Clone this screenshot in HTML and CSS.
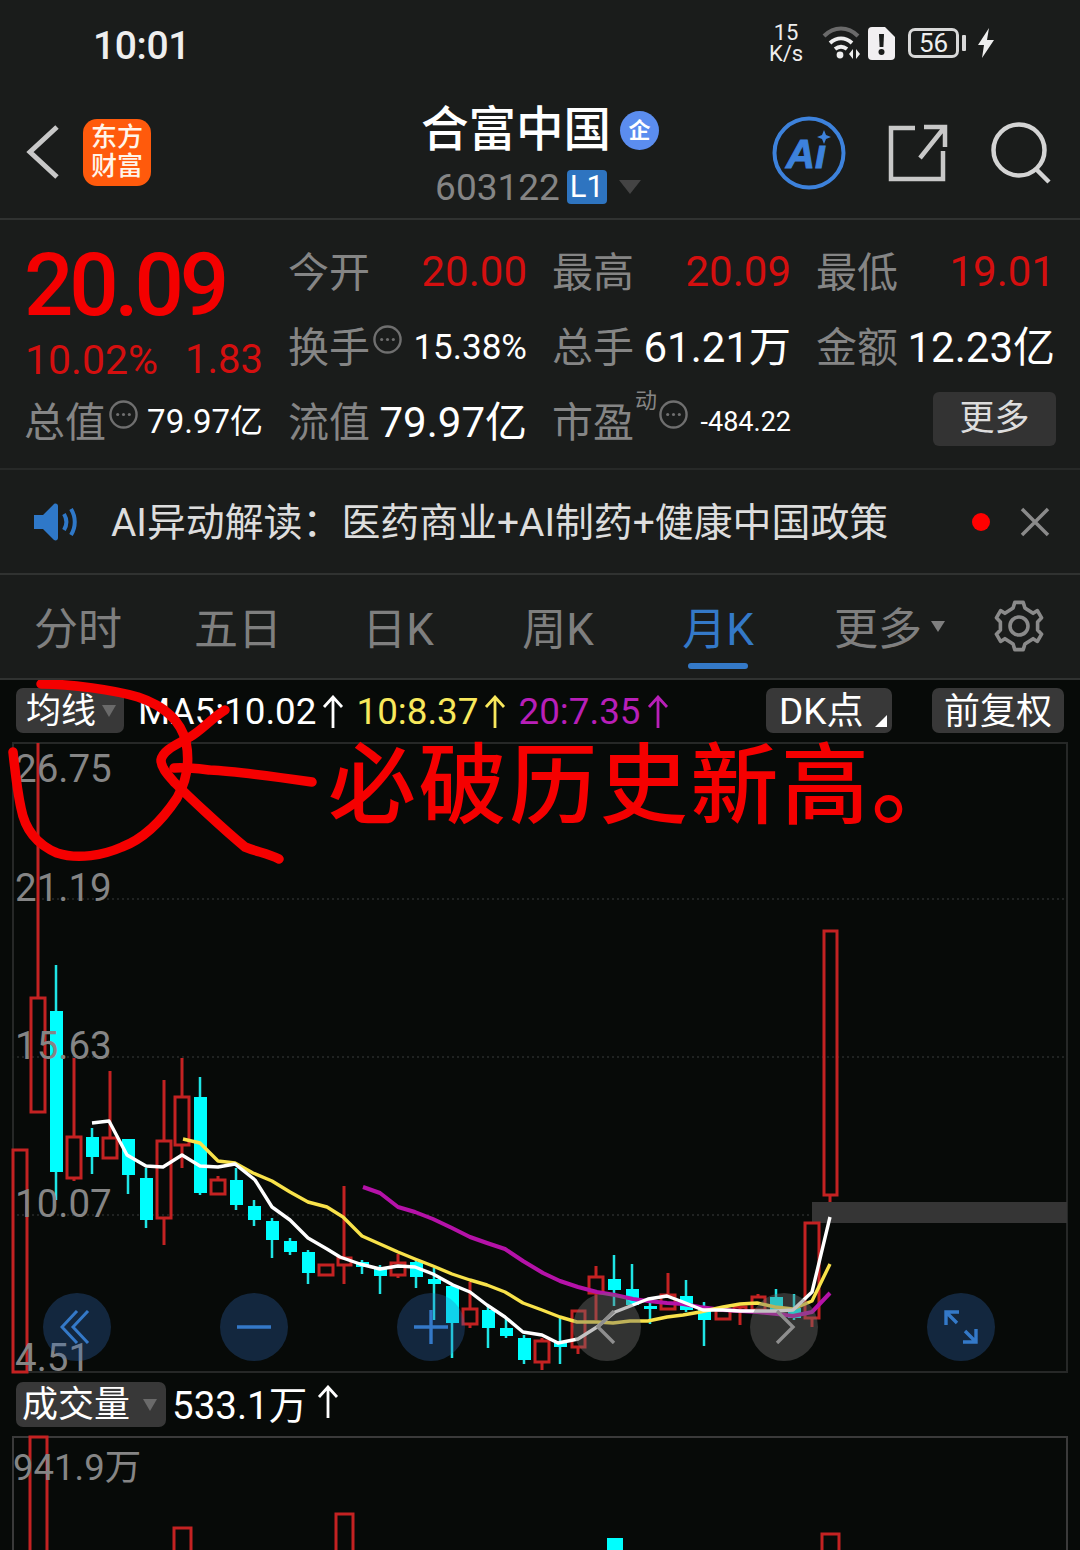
FILE: index.html
```html
<!DOCTYPE html>
<html lang="zh-CN">
<head>
    <meta charset="UTF-8">
    <meta name="viewport" content="width=device-width, initial-scale=1.0">
    <title>合富中国 603122</title>
    <link rel="stylesheet" href="styles.css">
</head>
<body>
    <svg class="defs">
        <defs>
            <symbol id="more" viewBox="0 0 32 32">
                <circle cx="16" cy="16" r="13.5" fill="none" stroke="#6f6f6f" stroke-width="2.5"/>
                <circle cx="10" cy="16" r="1.6" fill="#6f6f6f"/>
                <circle cx="16" cy="16" r="1.6" fill="#6f6f6f"/>
                <circle cx="22" cy="16" r="1.6" fill="#6f6f6f"/>
            </symbol>
            <symbol id="rise" viewBox="0 0 22 34">
                <path d="M11 33V2M2 12l9-10 9 10" fill="none" stroke="currentColor" stroke-width="2.8"/>
            </symbol>
        </defs>
    </svg>

    <!-- status bar -->
    <div class="status">
        <span class="clock">10:01</span>
        <div class="status-icons">
            <span class="speed">15<br>K/s</span>
            <svg class="wifi" width="40" height="34" viewBox="0 0 40 34">
                <path d="M2 10C12 0 26 0 36 10" fill="none" stroke="#6a6a6a" stroke-width="4"/>
                <path d="M8 17c7-6 15-6 22 0M13 23c4-3 8-3 12 0" fill="none" stroke="#eee" stroke-width="4"/>
                <circle cx="18" cy="29" r="3.4" fill="#eee"/>
                <path d="M31 23v10l-4-5zM34 23v10l4-5z" fill="#eee"/>
            </svg>
            <svg class="notice-sim" width="27" height="33" viewBox="0 0 27 33">
                <path d="M4 0h13l10 10v19a4 4 0 0 1-4 4H4a4 4 0 0 1-4-4V4a4 4 0 0 1 4-4z" fill="#f1eff1"/>
                <path d="M11 7h5l-.6 13h-3.8z" fill="#1a1c1b"/>
                <circle cx="13.5" cy="25" r="3" fill="#1a1c1b"/>
            </svg>
            <div class="battery"><span>56</span></div>
            <span class="battery-nub"></span>
            <svg class="bolt" width="16" height="30" viewBox="0 0 16 30">
                <path d="M11 0L0 17h6L4 30l12-18H9z" fill="#eee"/>
            </svg>
        </div>
    </div>

    <!-- title bar -->
    <div class="nav">
        <div class="nav-left">
            <svg class="back" width="36" height="56" viewBox="0 0 36 56">
                <path d="M32 3L5 28l27 25" fill="none" stroke="#c8c8c8" stroke-width="5"/>
            </svg>
            <div class="logo">东方<br>财富</div>
        </div>
        <div class="nav-title">
            <div class="name-row">
                <span class="name">合富中国</span>
                <span class="name-badge">企</span>
            </div>
            <div class="code-row">
                <span class="code">603122</span>
                <span class="level">L1</span>
                <span class="code-caret"></span>
            </div>
        </div>
        <div class="nav-right">
            <svg width="74" height="74" viewBox="0 0 74 74">
                <circle cx="37" cy="37" r="34.5" fill="none" stroke="#3d82dc" stroke-width="4"/>
                <text class="ai-text" x="14" y="52">Aı</text>
                <path d="M52 14l2 5 5 2-5 2-2 5-2-5-5-2 5-2z" fill="#3d82dc"/>
            </svg>
            <svg width="60" height="58" viewBox="0 0 60 58">
                <path d="M27 4H3v51h52V27M32 34L56 4M36 3h21v20" fill="none" stroke="#c8c8c8" stroke-width="4.5"/>
            </svg>
            <svg width="62" height="62" viewBox="0 0 62 62">
                <circle cx="29" cy="28" r="25.5" fill="none" stroke="#d4d4d4" stroke-width="4.5"/>
                <path d="M46 47l13 13" fill="none" stroke="#d4d4d4" stroke-width="4.5"/>
            </svg>
        </div>
    </div>

    <!-- quote table -->
    <div class="quote">
        <div class="price-box">
            <div class="price">20.09</div>
            <div class="change"><span>10.02%</span><span>1.83</span></div>
        </div>
        <div class="cell"><span class="label">今开</span><span class="val up">20.00</span></div>
        <div class="cell"><span class="label">最高</span><span class="val up">20.09</span></div>
        <div class="cell"><span class="label">最低</span><span class="val up">19.01</span></div>
        <div class="cell"><span class="label">换手<svg class="more"><use href="#more"/></svg></span><span class="val small">15.38%</span></div>
        <div class="cell"><span class="label">总手</span><span class="val">61.21万</span></div>
        <div class="cell"><span class="label">金额</span><span class="val">12.23亿</span></div>
        <div class="cell"><span class="label">总值<svg class="more"><use href="#more"/></svg></span><span class="val smaller">79.97亿</span></div>
        <div class="cell"><span class="label">流值</span><span class="val">79.97亿</span></div>
        <div class="cell"><span class="label">市盈<sup class="dyn">动</sup><svg class="more"><use href="#more"/></svg></span><span class="val tiny">-484.22</span></div>
        <div class="cell cell-end"><span class="more-btn">更多</span></div>
    </div>

    <!-- AI notice -->
    <div class="notice">
        <svg width="46" height="38" viewBox="0 0 46 38">
            <path d="M1 12h9L21 1c2-1 4 0 4 2v32c0 2-2 3-4 2L10 26H1z" fill="#2f78c8"/>
            <path d="M31 11c3 5 3 11 0 16M38 6c5 8 5 18 0 26" fill="none" stroke="#2f78c8" stroke-width="4"/>
        </svg>
        <span class="notice-text">AI异动解读：医药商业+AI制药+健康中国政策</span>
        <span class="dot"></span>
        <svg width="30" height="30" viewBox="0 0 30 30">
            <path d="M2 2l26 26M28 2L2 28" fill="none" stroke="#8a8a8a" stroke-width="3.5"/>
        </svg>
    </div>

    <!-- period tabs -->
    <div class="tabs">
        <span class="tab">分时</span>
        <span class="tab">五日</span>
        <span class="tab">日K</span>
        <span class="tab">周K</span>
        <span class="tab active">月K</span>
        <span class="tab">更多<i class="tab-caret"></i></span>
        <svg class="gear" width="52" height="52" viewBox="0 0 52 52">
            <path d="M21.8 2.4h8.4l1.7 5.5 8.2 5.4 4.3-2.7 4.2 7.2-4 4.25v7.9l4 4.25-4.2 7.2-4.3-2.7-8.2 5.4-1.7 5.5h-8.4l-1.7-5.5-8.2-5.4-4.3 2.7-4.2-7.2 4-4.25v-7.9l-4-4.25 4.2-7.2 4.3 2.7 8.2-5.4z" fill="none" stroke="#8a8a8a" stroke-width="3.6" stroke-linejoin="round"/>
            <circle cx="26" cy="26" r="9" fill="none" stroke="#8a8a8a" stroke-width="3.6"/>
        </svg>
    </div>

    <!-- chart area -->
    <div class="chart">
        <div class="chart-head">
            <span class="chip chip-ma">均线<i class="caret"></i></span>
            <div class="ma-values">
                <span class="ma ma5">MA5:10.02<svg class="rise"><use href="#rise"/></svg></span>
                <span class="ma ma10">10:8.37<svg class="rise"><use href="#rise"/></svg></span>
                <span class="ma ma20">20:7.35<svg class="rise"><use href="#rise"/></svg></span>
            </div>
            <span class="chip chip-dk">DK点</span>
            <span class="chip chip-fq">前复权</span>
        </div>

        <div class="plot">
            <div class="plot-buttons">
                <span class="round"><svg width="34" height="34" viewBox="0 0 34 34"><path d="M17 1L2 17l15 16M28 1L13 17l15 16" fill="none" stroke="#3479c8" stroke-width="3"/></svg></span>
                <span class="round"><svg width="34" height="34" viewBox="0 0 34 34"><path d="M0 17h34" stroke="#3479c8" stroke-width="3.4"/></svg></span>
                <span class="round"><svg width="34" height="34" viewBox="0 0 34 34"><path d="M0 17h34M17 0v34" stroke="#3479c8" stroke-width="3.4"/></svg></span>
                <span class="round round-gray"><svg width="34" height="34" viewBox="0 0 34 34"><path d="M24 1L8 17l16 16" fill="none" stroke="#8e8e8e" stroke-width="3.4"/></svg></span>
                <span class="round round-gray"><svg width="34" height="34" viewBox="0 0 34 34"><path d="M10 1l16 16-16 16" fill="none" stroke="#8e8e8e" stroke-width="3.4"/></svg></span>
                <span class="round"><svg width="34" height="34" viewBox="0 0 34 34"><path d="M2 15V2h13M2 2l11 11M32 19v13H19M32 32L21 21" fill="none" stroke="#3479c8" stroke-width="3.4"/></svg></span>
            </div>
        </div>

        <div class="volume-head">
            <span class="chip chip-vol">成交量<i class="caret"></i></span>
            <span class="vol-value">533.1万<svg class="rise vol-rise"><use href="#rise"/></svg></span>
        </div>
        <div class="volume"></div>

        <!-- candles, lines and axis labels, in page coordinates -->
        <svg class="canvas" width="1080" height="870" viewBox="0 680 1080 870">
            <path class="gridline" d="M12 899H1067M12 1057H1067M12 1215H812"/>
            <rect class="last-bar" x="812" y="1202" width="255" height="21"/>

            <g class="candle-up">
                <path d="M38 743V998M74 1058V1137M74 1178V1181M110 1071V1138M164 1080V1141M164 1218V1245M182 1058V1097M182 1145V1168M218 1176V1180M344 1186V1258M344 1265V1284M398 1254V1263M398 1275V1278M470 1282V1309M470 1324V1328M542 1338V1341M542 1362V1370M578 1347V1354M596 1266V1277M596 1293V1320M668 1273V1295M740 1307V1325M758 1294V1297M812 1318V1327M830 1195V1202"/>
                <rect x="13" y="1150" width="14" height="222"/>
                <rect x="31" y="998" width="14" height="114"/>
                <rect x="67" y="1137" width="14" height="41"/>
                <rect x="103" y="1138" width="14" height="20"/>
                <rect x="157" y="1141" width="14" height="77"/>
                <rect x="175" y="1097" width="14" height="48"/>
                <rect x="211" y="1180" width="14" height="14"/>
                <rect x="319" y="1265" width="14" height="10"/>
                <rect x="338" y="1258" width="13" height="7"/>
                <rect x="391" y="1263" width="14" height="12"/>
                <rect x="463" y="1309" width="14" height="15"/>
                <rect x="535" y="1341" width="14" height="21"/>
                <rect x="572" y="1311" width="13" height="36"/>
                <rect x="589" y="1277" width="14" height="16"/>
                <rect x="661" y="1295" width="14" height="14"/>
                <rect x="716" y="1310" width="14" height="9"/>
                <rect x="734" y="1307" width="12" height="4"/>
                <rect x="752" y="1297" width="13" height="13"/>
                <rect x="805" y="1223" width="14" height="95"/>
                <rect x="824" y="931" width="13" height="264"/>
            </g>

            <g class="candle-down">
                <path d="M56 965V1200M92 1128V1174M128 1139V1194M146 1168V1228M200 1077V1195M236 1168V1210M254 1200V1226M272 1218V1258M290 1238V1255M308 1250V1284M362 1260V1274M380 1265V1294M416 1260V1288M434 1268V1320M452 1284V1358M488 1305V1348M506 1318V1338M524 1335V1364M560 1318V1364M614 1255V1306M632 1264V1305M650 1298V1324M686 1280V1312M704 1302V1346M776 1289V1311M794 1294V1320"/>
                <rect x="50" y="1011" width="13" height="161"/>
                <rect x="86" y="1137" width="13" height="20"/>
                <rect x="122" y="1139" width="13" height="36"/>
                <rect x="140" y="1178" width="13" height="42"/>
                <rect x="194" y="1097" width="13" height="96"/>
                <rect x="230" y="1180" width="13" height="25"/>
                <rect x="248" y="1206" width="13" height="14"/>
                <rect x="266" y="1221" width="13" height="19"/>
                <rect x="284" y="1241" width="13" height="11"/>
                <rect x="302" y="1252" width="13" height="21"/>
                <rect x="356" y="1262" width="13" height="5"/>
                <rect x="374" y="1268" width="13" height="8"/>
                <rect x="410" y="1262" width="13" height="15"/>
                <rect x="428" y="1279" width="13" height="5"/>
                <rect x="446" y="1286" width="13" height="37"/>
                <rect x="482" y="1310" width="13" height="18"/>
                <rect x="500" y="1328" width="13" height="8"/>
                <rect x="518" y="1338" width="13" height="22"/>
                <rect x="554" y="1343" width="13" height="4"/>
                <rect x="608" y="1279" width="13" height="11"/>
                <rect x="626" y="1289" width="13" height="16"/>
                <rect x="644" y="1306" width="13" height="3"/>
                <rect x="680" y="1296" width="13" height="14"/>
                <rect x="698" y="1310" width="13" height="10"/>
                <rect x="770" y="1297" width="13" height="14"/>
                <rect x="788" y="1308" width="13" height="10"/>
            </g>

            <polyline class="line-ma20" points="363,1187 380,1193 398,1207 415,1212 433,1219 452,1228 470,1237 487,1243 505,1249 523,1261 543,1273 560,1281 578,1287 597,1292 615,1295 633,1299 648,1301 667,1303 683,1304 700,1307 723,1310 740,1311 757,1312 777,1314 793,1316 812,1312 830,1293"/>
            <polyline class="line-ma10" points="183,1139 200,1143 218,1161 235,1163 253,1173 272,1181 290,1192 308,1202 327,1207 343,1217 362,1236 380,1244 398,1252 415,1259 433,1266 452,1274 470,1280 487,1285 505,1292 523,1303 542,1310 560,1317 577,1322 597,1322 613,1323 630,1321 648,1321 667,1317 683,1315 700,1312 723,1307 740,1304 757,1303 775,1307 793,1309 812,1301 830,1264"/>
            <polyline class="line-ma5" points="92,1123 109,1121 127,1155 146,1166 163,1167 182,1155 200,1166 218,1167 235,1164 255,1180 272,1207 290,1220 308,1238 327,1249 340,1257 360,1264 380,1269 398,1266 415,1267 433,1274 453,1285 470,1292 487,1305 505,1317 523,1332 542,1335 558,1343 578,1339 597,1327 615,1312 633,1305 648,1299 667,1296 683,1302 703,1310 723,1310 740,1311 757,1311 777,1311 793,1310 812,1292 830,1217"/>

            <g class="candle-up vol-bars">
                <rect x="30" y="1437" width="17" height="120"/>
                <rect x="174" y="1528" width="17" height="40"/>
                <rect x="336" y="1514" width="17" height="50"/>
                <rect x="822" y="1534" width="17" height="30"/>
            </g>
            <rect class="vol-down" x="607" y="1538" width="16" height="12"/>

            <g class="axis">
                <text x="15" y="782">26.75</text>
                <text x="15" y="901">21.19</text>
                <text x="15" y="1059">15.63</text>
                <text x="15" y="1217">10.07</text>
                <text x="15" y="1371">4.51</text>
                <text class="axis-vol" x="13" y="1480">941.9万</text>
            </g>

            <!-- hand drawn marks on the screenshot -->
            <g class="scribble">
                <path d="M41 684C72 684 114 690 138 697C165 706 181 722 186 742C190 762 186 782 177 798C165 816 146 838 122 847C104 855 78 860 57 853C38 845 25 830 21 808C17 790 15 770 13 752"/>
                <path d="M225 710C212 718 202 730 190 737C176 745 163 750 161 760C161 768 168 775 175 783C188 796 222 828 245 847C257 852 267 853 279 859"/>
                <path d="M174 768C186 767 201 769 210 770C233 771 284 778 312 782"/>
            </g>
        </svg>
        <div class="scrawl">必破历史新高。</div>
    </div>
</body>
</html>
```

FILE: styles.css
```css
* {
    box-sizing: border-box;
}
body {
    margin: 0;
    width: 1080px;
    height: 1550px;
    overflow: hidden;
    background-color: #1a1c1b;
    color: #fff;
    font-family: Roboto, "Noto Sans CJK SC", sans-serif;
}
.defs {
    display: none;
}

/* status bar */
.status {
    height: 90px;
    display: flex;
    align-items: center;
    justify-content: space-between;
    padding: 0 86px 0 93px;
}
.clock {
    font-size: 39px;
    font-weight: 500;
    letter-spacing: -0.4px;
    color: #eee;
    margin-top: 1px;
}
.status-icons {
    display: flex;
    align-items: center;
    margin-bottom: 4px;
}
.speed {
    width: 36px;
    margin-left: -2px;
    margin-right: 18px;
    font-size: 22px;
    line-height: 21px;
    text-align: center;
    color: #eee;
}
.wifi {
    margin-right: 6px;
}
.notice-sim {
    margin-right: 13px;
}
.battery {
    width: 51px;
    height: 30px;
    border: 3px solid #d8d8d8;
    border-radius: 7px;
    font-size: 26px;
    line-height: 24px;
    text-align: center;
    color: #eee;
}
.battery-nub {
    width: 4px;
    height: 16px;
    margin-left: 3px;
    margin-right: 12px;
    border-radius: 1px;
    background-color: #d8d8d8;
}

/* title bar */
.nav {
    height: 130px;
    display: grid;
    grid-template-columns: 1fr auto 1fr;
    border-bottom: 2px solid #303231;
}
.nav-left {
    display: flex;
    align-items: center;
    padding-left: 25px;
    padding-bottom: 4px;
}
.back {
    margin-right: 22px;
}
.logo {
    width: 68px;
    height: 67px;
    border-radius: 14px;
    background-color: #ff5a0c;
    color: #fff5ea;
    font-size: 26px;
    font-weight: 500;
    line-height: 29px;
    text-align: center;
    padding-top: 4px;
}
.nav-title {
    display: flex;
    flex-direction: column;
    align-items: center;
    padding-top: 9px;
}
.name-row {
    display: flex;
    align-items: center;
    height: 62px;
}
.name {
    font-size: 47.5px;
    line-height: 62px;
    font-weight: 500;
}
.name-badge {
    width: 39px;
    height: 39px;
    margin-left: 9px;
    border-radius: 50%;
    background-color: #5b8def;
    font-size: 22px;
    font-weight: 700;
    line-height: 39px;
    text-align: center;
}
.code-row {
    display: flex;
    align-items: center;
    height: 36px;
    margin-top: 8px;
    margin-right: 4px;
}
.code {
    font-size: 37px;
    color: #858585;
}
.level {
    width: 40px;
    height: 34px;
    margin-left: 7px;
    border-radius: 4px;
    background-color: #2e74c0;
    font-size: 31px;
    line-height: 34px;
    text-align: center;
}
.code-caret {
    margin-left: 12px;
    border-left: 11px solid transparent;
    border-right: 11px solid transparent;
    border-top: 14px solid #444;
}
.nav-right {
    display: flex;
    align-items: center;
    justify-content: flex-end;
    gap: 42px;
    padding-right: 28px;
    padding-bottom: 3px;
}
.ai-text {
    font-family: "Liberation Sans", sans-serif;
    font-size: 40px;
    font-weight: 700;
    font-style: italic;
    fill: #3d82dc;
    stroke: #3d82dc;
    stroke-width: 1;
}

/* quote table */
.quote {
    height: 250px;
    display: grid;
    grid-template-columns: repeat(4, 239px);
    grid-template-rows: repeat(3, 75px);
    column-gap: 25px;
    padding: 11px 0 0 24px;
    border-bottom: 2px solid #272928;
}
.price-box {
    grid-row: span 2;
    padding-top: 4px;
}
.price {
    font-size: 87px;
    font-weight: 500;
    line-height: 100px;
    letter-spacing: -4.2px;
    color: #f40000;
}
.change {
    display: flex;
    justify-content: space-between;
    margin-top: 1px;
    padding-left: 1px;
    font-size: 41px;
    line-height: 48px;
    color: #d40f0f;
}
.change span:last-child {
    font-size: 40px;
}
.price-box + .cell {
    grid-column: 2;
}
.cell {
    display: flex;
    align-items: center;
    justify-content: space-between;
}
.label {
    display: flex;
    align-items: center;
    font-size: 41px;
    color: #858585;
    white-space: nowrap;
}
.more {
    width: 31px;
    height: 31px;
    margin-left: 2px;
    margin-top: -8px;
}
.dyn {
    font-size: 22px;
    line-height: 22px;
    margin-top: -36px;
    margin-left: 1px;
    margin-right: -1px;
    vertical-align: baseline;
}
.val {
    font-size: 42px;
    white-space: nowrap;
}
.val.up {
    margin-top: 6px;
    color: #d40f0f;
}
.val.small {
    margin-top: 7px;
    font-size: 35px;
}
.val.smaller {
    font-size: 33px;
}
.val.tiny {
    margin-top: 6px;
    font-size: 27px;
}
.cell-end {
    justify-content: flex-end;
}
.more-btn {
    width: 123px;
    height: 54px;
    margin-right: -1px;
    border-radius: 6px;
    background-color: #333;
    color: #ddd;
    font-size: 35px;
    line-height: 54px;
    text-align: center;
}

/* notice */
.notice {
    height: 105px;
    display: flex;
    align-items: center;
    padding: 0 30px 0 33px;
    border-bottom: 2px solid #303231;
}
.notice-text {
    margin-left: 32px;
    margin-bottom: 5px;
    font-size: 38.9px;
    color: #ddd;
    white-space: nowrap;
}
.dot {
    width: 18px;
    height: 18px;
    margin-left: auto;
    margin-right: 30px;
    border-radius: 50%;
    background-color: #f00;
}

/* tabs */
.tabs {
    height: 105px;
    display: grid;
    grid-template-columns: repeat(6, 160px) 1fr;
    align-items: center;
    padding-bottom: 2px;
    margin-left: -2px;
    border-bottom: 2px solid #303231;
}
.tab {
    position: relative;
    font-size: 44px;
    text-align: center;
    color: #7f7f7f;
}
.tab.active {
    color: #3479c8;
}
.tab.active::after {
    content: "";
    position: absolute;
    left: 50%;
    bottom: -11px;
    width: 60px;
    height: 6px;
    margin-left: -30px;
    border-radius: 3px;
    background-color: #3479c8;
}
.tab-caret {
    position: absolute;
    top: 27px;
    margin-left: 9px;
    border-left: 7px solid transparent;
    border-right: 7px solid transparent;
    border-top: 11px solid #7f7f7f;
}
.gear {
    justify-self: center;
}

/* chart */
.chart {
    position: relative;
    height: 872px;
    background-color: #070a08;
}
.chart-head {
    height: 62px;
    display: flex;
    align-items: flex-start;
    padding: 8px 16px 0;
}
.chip {
    position: relative;
    height: 45px;
    border-radius: 7px;
    background-color: #383838;
    font-size: 35px;
    line-height: 48px;
    color: #fff;
}
.chip-ma {
    width: 108px;
    padding-left: 10px;
}
.caret {
    position: absolute;
    top: 17px;
    border-left: 7px solid transparent;
    border-right: 7px solid transparent;
    border-top: 12px solid #6a6a6a;
}
.chip-ma .caret {
    left: 86px;
}
.ma-values {
    display: flex;
    gap: 12px;
    width: 642px;
    padding-left: 14px;
    margin-top: 1px;
}
.ma {
    display: flex;
    align-items: center;
    font-size: 36.8px;
    line-height: 45px;
    white-space: nowrap;
}
.ma5 {
    color: #fff;
}
.ma10 {
    color: #f8e85c;
}
.ma20 {
    color: #b81fb8;
}
.rise {
    width: 22px;
    height: 34px;
    margin-left: 6px;
}
.chip-dk {
    width: 126px;
    padding-left: 13px;
    font-size: 37px;
}
.chip-dk::after {
    content: "";
    position: absolute;
    right: 5px;
    bottom: 6px;
    border-left: 12px solid transparent;
    border-bottom: 12px solid #fff;
}
.chip-fq {
    width: 132px;
    margin-left: 40px;
    font-size: 36px;
    text-align: center;
}
.plot {
    position: relative;
    height: 631px;
    margin: 0 12px 0 12px;
    border: 2px solid #262827;
}
.plot-buttons {
    position: absolute;
    left: 29px;
    bottom: 10px;
    width: 952px;
    z-index: 2;
    display: flex;
    justify-content: space-between;
}
.round {
    width: 68px;
    height: 68px;
    display: flex;
    align-items: center;
    justify-content: center;
    border-radius: 50%;
    background-color: rgba(50, 110, 190, 0.3);
}
.round-gray {
    background-color: rgba(110, 110, 110, 0.42);
}
.volume-head {
    height: 63px;
    display: flex;
    align-items: center;
    padding: 0 0 0 16px;
}
.chip-vol {
    width: 150px;
    padding-left: 6px;
    font-size: 36px;
    line-height: 46px;
}
.chip-vol .caret {
    left: 127px;
}
.vol-value {
    display: flex;
    align-items: center;
    margin-left: 6px;
    margin-bottom: 5px;
    font-size: 38.5px;
}
.vol-rise {
    margin-left: 10px;
}
.volume {
    height: 120px;
    margin: 0 12px;
    border: 2px solid #3a3a3a;
    border-bottom: none;
}
.canvas {
    position: absolute;
    left: 0;
    top: 0;
    pointer-events: none;
}
.gridline {
    fill: none;
    stroke: #2a2c2b;
    stroke-width: 1.5;
    stroke-dasharray: 2 3;
}
.last-bar {
    fill: #353535;
}
.candle-up path {
    fill: none;
    stroke: #c42222;
    stroke-width: 3;
}
.candle-up rect {
    fill: none;
    stroke: #c42222;
    stroke-width: 3;
}
.candle-down path {
    fill: none;
    stroke: #1fe5e5;
    stroke-width: 2.5;
}
.candle-down rect {
    fill: #00ffff;
}
.vol-down {
    fill: #00ffff;
}
.line-ma5,
.line-ma10,
.line-ma20 {
    fill: none;
    stroke-width: 3.4;
    stroke-linejoin: round;
}
.line-ma5 {
    stroke: #fff;
}
.line-ma10 {
    stroke: #f8e24a;
}
.line-ma20 {
    stroke: #b512a8;
    stroke-width: 4;
}
.axis text {
    font-size: 38.5px;
    fill: #858585;
}
.axis .axis-vol {
    font-size: 36.5px;
}
.scribble path {
    fill: none;
    stroke: #f50000;
    stroke-width: 9.5;
    stroke-linecap: round;
    stroke-linejoin: round;
}
.scrawl {
    position: absolute;
    left: 328px;
    top: 46px;
    z-index: 3;
    font-size: 88px;
    letter-spacing: 2.6px;
    line-height: 120px;
    font-weight: 500;
    color: #f50000;
    white-space: nowrap;
}
```
